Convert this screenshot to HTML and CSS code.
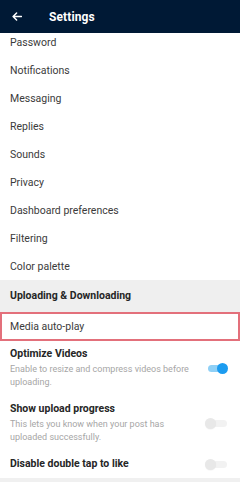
FILE: index.html
```html
<!DOCTYPE html>
<html>
<head>
<meta charset="utf-8">
<link rel="stylesheet" href="styles.css">
</head>
<body>
<div class="app">
  <header class="bar">
    <svg class="back" width="10" height="9" viewBox="0 0 10 9"><path d="M9.5 4.5H1.2M4.6 1L1.1 4.5 4.6 8" fill="none" stroke="#fff" stroke-width="1.5" stroke-linecap="round" stroke-linejoin="round"/></svg>
    <span class="title">Settings</span>
  </header>
  <ul class="list">
    <li class="row first">Password</li>
    <li class="row">Notifications</li>
    <li class="row">Messaging</li>
    <li class="row">Replies</li>
    <li class="row">Sounds</li>
    <li class="row">Privacy</li>
    <li class="row">Dashboard preferences</li>
    <li class="row">Filtering</li>
    <li class="row">Color palette</li>
  </ul>
  <div class="section">Uploading &amp; Downloading</div>
  <div class="row highlight">Media auto-play</div>
  <div class="opt">
    <div class="opt-text">
      <div class="opt-title">Optimize Videos</div>
      <div class="opt-desc">Enable to resize and compress videos before uploading.</div>
    </div>
    <span class="toggle on"><span class="knob"></span></span>
  </div>
  <div class="opt">
    <div class="opt-text">
      <div class="opt-title">Show upload progress</div>
      <div class="opt-desc">This lets you know when your post has uploaded successfully.</div>
    </div>
    <span class="toggle"><span class="knob"></span></span>
  </div>
  <div class="opt last">
    <div class="opt-text">
      <div class="opt-title">Disable double tap to like</div>
    </div>
    <span class="toggle"><span class="knob"></span></span>
  </div>
  <div class="footer"></div>
</div>
</body>
</html>
```
FILE: styles.css
```css
* { box-sizing: border-box; }
html, body { margin: 0; padding: 0; background: #fff; }
body {
  width: 240px;
  height: 482px;
  overflow: hidden;
  font-family: Roboto, "Liberation Sans", sans-serif;
  color: #3b3b3b;
}
.bar {
  height: 33px;
  background: #001935;
  display: flex;
  align-items: center;
  padding-left: 12px;
}
.back { display: block; }
.title {
  margin-left: 27px;
  color: #fff;
  font-weight: 700;
  font-size: 12px;
  letter-spacing: 0.1px;
}
.list { list-style: none; margin: 0; padding: 0; }
.row {
  height: 28px;
  line-height: 14px;
  padding: 8px 10px 6px;
  font-size: 10.5px;
}
.row.first { height: 23px; padding-top: 3px; }
.section {
  height: 32px;
  background: #efefef;
  padding: 9px 10px;
  line-height: 14px;
  font-size: 10.5px;
  font-weight: 700;
  color: #262626;
}
.row.highlight {
  height: 29px;
  border: 2px solid #e3707b;
  padding: 5px 8px;
  line-height: 15px;
}
.opt {
  display: flex;
  align-items: center;
  padding: 6px 11px 7px 10px;
}
.opt-text { flex: 1; }
.opt-title {
  font-size: 10.5px;
  font-weight: 700;
  line-height: 14px;
  color: #262626;
}
.opt-desc {
  margin-top: 2px;
  font-size: 9px;
  line-height: 13px;
  color: #a6a6a6;
  width: 190px;
}
.toggle {
  position: relative;
  width: 19px;
  height: 7px;
  border-radius: 4px;
  background: #f2f2f2;
  flex: none;
  margin-right: 2px;
}
.toggle .knob {
  position: absolute;
  top: -2px;
  left: -3px;
  width: 11px;
  height: 11px;
  border-radius: 50%;
  background: #e8e8e8;
  box-shadow: 0 0.5px 1px rgba(0,0,0,0.06);
}
.toggle.on { background: #8fd0f6; }
.toggle.on .knob { left: auto; right: -1px; background: #1c9cf0; box-shadow: none; }
.footer { height: 10px; background: #f0f0f0; }
```
